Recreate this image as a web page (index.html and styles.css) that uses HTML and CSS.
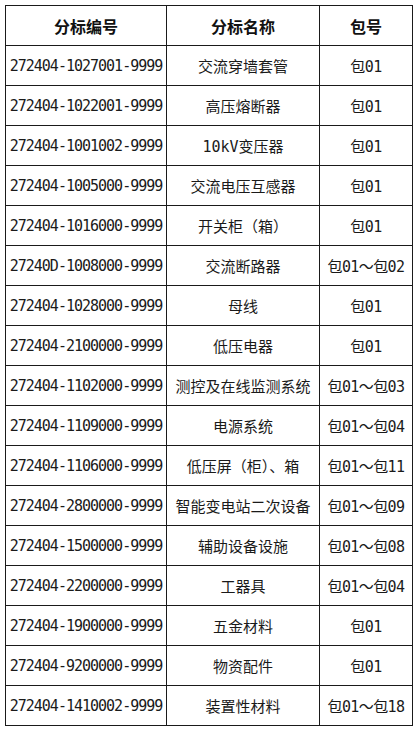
FILE: index.html
```html
<!DOCTYPE html>
<html lang="zh-CN">
<head>
<meta charset="utf-8">
<title>分标表</title>
<link rel="stylesheet" href="styles.css">
</head>
<body>
<table class="lots">
  <colgroup>
    <col class="c-code">
    <col class="c-name">
    <col class="c-pkg">
  </colgroup>
  <thead>
    <tr><th>分标编号</th><th>分标名称</th><th>包号</th></tr>
  </thead>
  <tbody>
    <tr><td class="code">272404-1027001-9999</td><td>交流穿墙套管</td><td class="pkg">包01</td></tr>
    <tr><td class="code">272404-1022001-9999</td><td>高压熔断器</td><td class="pkg">包01</td></tr>
    <tr><td class="code">272404-1001002-9999</td><td>10kV变压器</td><td class="pkg">包01</td></tr>
    <tr><td class="code">272404-1005000-9999</td><td>交流电压互感器</td><td class="pkg">包01</td></tr>
    <tr><td class="code">272404-1016000-9999</td><td>开关柜（箱）</td><td class="pkg">包01</td></tr>
    <tr><td class="code">27240D-1008000-9999</td><td>交流断路器</td><td class="pkg">包01～包02</td></tr>
    <tr><td class="code">272404-1028000-9999</td><td>母线</td><td class="pkg">包01</td></tr>
    <tr><td class="code">272404-2100000-9999</td><td>低压电器</td><td class="pkg">包01</td></tr>
    <tr><td class="code">272404-1102000-9999</td><td>测控及在线监测系统</td><td class="pkg">包01～包03</td></tr>
    <tr><td class="code">272404-1109000-9999</td><td>电源系统</td><td class="pkg">包01～包04</td></tr>
    <tr><td class="code">272404-1106000-9999</td><td>低压屏（柜）、箱</td><td class="pkg">包01～包11</td></tr>
    <tr><td class="code">272404-2800000-9999</td><td>智能变电站二次设备</td><td class="pkg">包01～包09</td></tr>
    <tr><td class="code">272404-1500000-9999</td><td>辅助设备设施</td><td class="pkg">包01～包08</td></tr>
    <tr><td class="code">272404-2200000-9999</td><td>工器具</td><td class="pkg">包01～包04</td></tr>
    <tr><td class="code">272404-1900000-9999</td><td>五金材料</td><td class="pkg">包01</td></tr>
    <tr><td class="code">272404-9200000-9999</td><td>物资配件</td><td class="pkg">包01</td></tr>
    <tr><td class="code">272404-1410002-9999</td><td>装置性材料</td><td class="pkg">包01～包18</td></tr>
  </tbody>
</table>
</body>
</html>
```
FILE: styles.css
```css
html, body {
  margin: 0;
  padding: 0;
  background: #ffffff;
}
body {
  padding: 5px;
}
.lots {
  border-collapse: collapse;
  table-layout: fixed;
  width: 408px;
  font-family: "DejaVu Sans Mono", "Noto Sans CJK SC", sans-serif;
  font-size: 15px;
  color: #1a1a1a;
}
.c-code { width: 161px; }
.c-name { width: 153px; }
.c-pkg { width: 93px; }
.lots th,
.lots td {
  border: 1px solid #1a1a1a;
  height: 39px;
  padding: 0;
  text-align: center;
  vertical-align: middle;
  white-space: nowrap;
  overflow: hidden;
}
.lots th {
  font-weight: bold;
  font-size: 16px;
  color: #111;
}
.lots td.code {
  letter-spacing: -1px;
}
.lots td.pkg {
  letter-spacing: -0.6px;
}
```
